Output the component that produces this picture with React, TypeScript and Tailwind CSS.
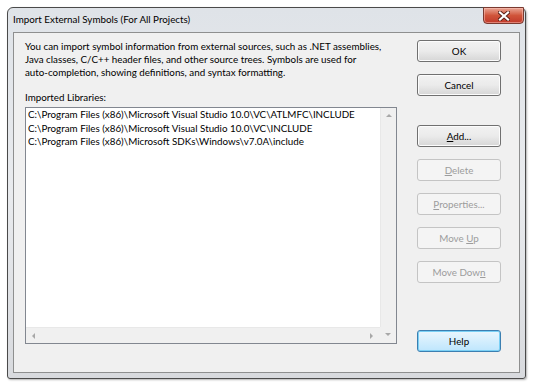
import React from "react";

const font = { fontFamily: 'Lato, "Liberation Sans", Arial, sans-serif' };

type BtnProps = {
  children: React.ReactNode;
  disabled?: boolean;
  focused?: boolean;
};

const DlgButton: React.FC<BtnProps> = ({ children, disabled, focused }) => {
  let cls =
    "w-[84px] h-[22px] rounded-[3px] border text-[9.8px] flex items-center justify-center ";
  if (disabled) {
    cls += "border-[#c4c4c4] bg-[#f4f4f4] text-[#9c9c9c]";
  } else if (focused) {
    cls +=
      "border-[#3c7fb1] bg-gradient-to-b from-[#eaf6fd] to-[#bee6fd] text-black shadow-[inset_0_0_0_1px_#7ad0f5]";
  } else {
    cls +=
      "border-[#707070] bg-gradient-to-b from-[#f2f2f2] via-[#ebebeb] to-[#d6d6d6] text-black shadow-[inset_0_0_0_1px_#fcfcfc]";
  }
  return <div className={cls}>{children}</div>;
};

const ScrollArrow: React.FC<{ dir: "up" | "down" | "left" | "right" }> = ({ dir }) => {
  const pts: Record<string, string> = {
    up: "1,5 4,2 7,5",
    down: "1,2 4,5 7,2",
    left: "5,1 2,4 5,7",
    right: "2,1 5,4 2,7",
  };
  return (
    <svg width="8" height="8" viewBox="0 0 8 8">
      <polygon points={pts[dir]} fill="#a8a8a8" />
    </svg>
  );
};

// the Win7 close glyph: white X with a dark rim
const CloseGlyph = () => (
  <svg width="12" height="10" viewBox="0 0 12 10">
    <path d="M2 1.5 L10 8.5 M10 1.5 L2 8.5" stroke="#5a2018" strokeWidth="4" strokeLinecap="square" />
    <path d="M2 1.5 L10 8.5 M10 1.5 L2 8.5" stroke="#ffffff" strokeWidth="2.2" strokeLinecap="square" />
  </svg>
);

export default function App() {
  return (
    <div className="w-[535px] h-[386px] bg-white pt-[7px] pl-[7px]" style={font}>
      {/* window frame */}
      <div className="w-[519px] h-[372px] rounded-t-[6px] rounded-b-[3px] border border-[#4a4a4a] bg-gradient-to-b from-[#dfe3e8] via-[#e9ebee] to-[#d8dade] flex flex-col shadow-[1px_1px_2px_rgba(0,0,0,0.3)]">
        {/* title bar */}
        <div className="h-[24px] flex items-start justify-between pl-[5px] pr-[1px]">
          <span className="text-[9.8px] text-black leading-[10px] mt-[6px]">
            Import External Symbols (For All Projects)
          </span>
          <div className="w-[41px] h-[17px] -mt-px rounded-b-[4px] border border-[#7a3a30] bg-gradient-to-b from-[#e8a493] via-[#d0543a] to-[#c0382a] flex items-center justify-center shadow-[inset_0_0_0_1px_rgba(255,200,190,0.5)]">
            <CloseGlyph />
          </div>
        </div>
        {/* client area */}
        <div className="mx-[5px] mb-[5px] flex-1 border border-[#8e8f8f] bg-[#f0f0f0] flex pt-[7px] pl-[11px]">
          <div className="w-[372px] flex flex-col">
            <p className="text-[9.8px] leading-[13px] text-black whitespace-nowrap">
              You can import symbol information from external sources, such as .NET assemblies,
              <br />
              Java classes, C/C++ header files, and other source trees. Symbols are used for
              <br />
              auto-completion, showing definitions, and syntax formatting.
            </p>
            <div className="text-[9.8px] leading-[13px] text-black mt-[12px]">Imported Libraries:</div>
            <div className="mt-[3px] h-[237px] border border-[#828790] bg-white flex flex-col">
              <div className="flex flex-1 min-h-0">
                <div className="flex-1 pl-[2px] text-[9.8px] leading-[13.5px] text-black whitespace-nowrap overflow-hidden">
                  <div>C:\Program Files (x86)\Microsoft Visual Studio 10.0\VC\ATLMFC\INCLUDE</div>
                  <div>C:\Program Files (x86)\Microsoft Visual Studio 10.0\VC\INCLUDE</div>
                  <div>C:\Program Files (x86)\Microsoft SDKs\Windows\v7.0A\include</div>
                </div>
                <div className="w-[16px] bg-[#f0f0f0] border-l border-[#e8e8e8] flex flex-col items-center pt-[4px]">
                  <ScrollArrow dir="up" />
                </div>
              </div>
              <div className="h-[16px] flex">
                <div className="flex-1 bg-[#f0f0f0] border-t border-[#e8e8e8] flex items-center justify-between px-[4px]">
                  <ScrollArrow dir="left" />
                  <ScrollArrow dir="right" />
                </div>
                <div className="w-[16px] bg-[#f0f0f0] flex items-center justify-center">
                  <ScrollArrow dir="down" />
                </div>
              </div>
            </div>
          </div>
          <div className="ml-[20px] flex flex-col">
            <DlgButton>OK</DlgButton>
            <div className="mt-[12px]">
              <DlgButton>Cancel</DlgButton>
            </div>
            <div className="mt-[29px] flex flex-col gap-[12px]">
              <DlgButton>
                <span><u>A</u>dd...</span>
              </DlgButton>
              <DlgButton disabled>
                <span><u>D</u>elete</span>
              </DlgButton>
              <DlgButton disabled>
                <span><u>P</u>roperties...</span>
              </DlgButton>
              <DlgButton disabled>
                <span>Move <u>U</u>p</span>
              </DlgButton>
              <DlgButton disabled>
                <span>Move Dow<u>n</u></span>
              </DlgButton>
            </div>
            <div className="mt-[47px]">
              <DlgButton focused>Help</DlgButton>
            </div>
          </div>
        </div>
      </div>
    </div>
  );
}
